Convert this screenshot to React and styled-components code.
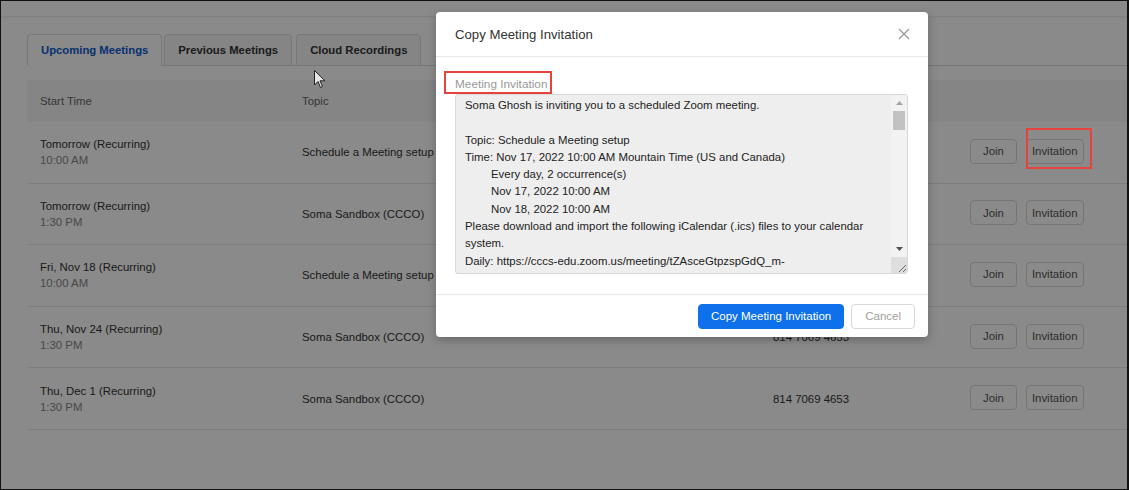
import React from "react";
import styled, { createGlobalStyle } from "styled-components";

const GlobalStyle = createGlobalStyle`
    body {
        margin: 0;
        background: #fff;
        font-family: "Liberation Sans", Arial, sans-serif;
    }
`;

const Frame = styled.div`
    position: relative;
    width: 1129px;
    height: 490px;
    box-sizing: border-box;
    border: 1px solid #111;
    border-right-width: 2px;
    background: #fff;
    overflow: hidden;
`;

const TopBar = styled.div`
    height: 15px;
    border-bottom: 1px solid #ececec;
    box-shadow: 0 1px 2px rgba(0, 0, 0, 0.04);
`;

const Main = styled.div`
    padding: 17px 0 0 26px;
`;

const TabBar = styled.div`
    display: flex;
    height: 32px;
    box-sizing: border-box;
    border-bottom: 1px solid #dcdcdc;
`;

const Tab = styled.div`
    display: flex;
    align-items: center;
    padding: 0 13px;
    margin-right: ${props => props.gap || 3}px;
    height: 32px;
    box-sizing: border-box;
    border: 1px solid #dcdcdc;
    border-bottom-color: ${props => props.active ? "#fff" : "#dcdcdc"};
    border-radius: 4px 4px 0 0;
    background: ${props => props.active ? "#fff" : "#f6f6f6"};
    color: ${props => props.active ? "#0e5bcf" : "#333"};
    font-size: 11.3px;
    font-weight: 700;
`;

const Table = styled.div`
    margin-top: 14px;
`;

const Row = styled.div`
    display: grid;
    grid-template-columns: 262px 471px 197px auto;
    align-items: center;
    padding-left: 13px;
    height: ${props => props.head ? "42px" : "61.6px"};
    box-sizing: border-box;
    background: ${props => props.head ? "#f5f5f5" : "#fff"};
    border-bottom: ${props => props.head ? "none" : "1px solid #e9e9e9"};
    font-size: 11.4px;
    color: ${props => props.head ? "#666" : "#333"};
`;

const When = styled.div`
    line-height: 16px;
`;

const Sub = styled.div`
    color: #888;
`;

const Actions = styled.div`
    display: flex;
    gap: 9px;
    padding-bottom: 2px;
`;

const SmallButton = styled.div`
    position: relative;
    height: 25px;
    box-sizing: border-box;
    padding: 0 ${props => props.pad}px;
    display: flex;
    align-items: center;
    border: 1px solid #d9d9d9;
    border-radius: 4px;
    background: #fff;
    color: #555;
    font-size: 11.4px;
    ${props => props.marked && `
        &::after {
            content: "";
            position: absolute;
            left: -1px;
            top: -12px;
            width: 66px;
            height: 41px;
            box-sizing: border-box;
            border: 2px solid #e8423c;
            z-index: 20;
        }
    `}
`;

const Overlay = styled.div`
    position: absolute;
    inset: 0;
    background: rgba(0, 0, 0, 0.46);
    z-index: 10;
`;

const Modal = styled.div`
    position: absolute;
    top: 11px;
    left: 435px;
    width: 492px;
    background: #fff;
    border-radius: 4px;
    box-shadow: 0 3px 10px rgba(0, 0, 0, 0.25);
    z-index: 30;
`;

const ModalHead = styled.div`
    display: flex;
    align-items: center;
    justify-content: space-between;
    height: 44px;
    padding: 0 18px 0 19px;
    border-bottom: 1px solid #e8e8e8;
`;

const ModalTitle = styled.div`
    font-size: 13.2px;
    color: #333;
`;

const ModalBody = styled.div`
    padding: 19px 20px 20px 19px;
`;

const FieldLabel = styled.div`
    position: relative;
    width: fit-content;
    font-size: 11.8px;
    line-height: 16px;
    color: #999;
    margin-bottom: 2px;
    &::after {
        content: "";
        position: absolute;
        left: -11px;
        top: -5px;
        width: 108px;
        height: 23px;
        box-sizing: border-box;
        border: 2px solid #e8423c;
    }
`;

const TextBox = styled.div`
    display: flex;
    height: 180px;
    box-sizing: border-box;
    border: 1px solid #d8d8d8;
    border-radius: 3px;
    background: #eeeeee;
    overflow: hidden;
`;

const TextContent = styled.div`
    flex: 1;
    padding: 2px 9px 0 9px;
    font-size: 11.4px;
    line-height: 17.3px;
    color: #222;
    white-space: pre;
    overflow: hidden;
`;

const Line = styled.div`
    padding-left: ${props => props.indent ? "26px" : "0"};
    min-height: 17.3px;
`;

const ScrollTrack = styled.div`
    width: 16px;
    display: flex;
    flex-direction: column;
    background: #f2f2f2;
`;

const ScrollArrow = styled.div`
    height: 16px;
    display: flex;
    align-items: center;
    justify-content: center;
`;

const ScrollThumb = styled.div`
    height: 19px;
    margin: 0 2px;
    background: #c2c2c2;
`;

const ScrollSpace = styled.div`
    flex: 1;
`;

const Grip = styled.div`
    height: 16px;
    background: #dedede;
    display: flex;
    align-items: flex-end;
    justify-content: flex-end;
`;

const ModalFoot = styled.div`
    display: flex;
    justify-content: flex-end;
    align-items: center;
    gap: 7px;
    height: 42px;
    padding-right: 13px;
    border-top: 1px solid #e8e8e8;
`;

const FootButton = styled.div`
    height: 25px;
    box-sizing: border-box;
    display: flex;
    align-items: center;
    padding: 0 ${props => props.primary ? 12 : 13}px;
    border-radius: 4px;
    font-size: 11.5px;
    border: 1px solid ${props => props.primary ? "#0e71eb" : "#d9d9d9"};
    background: ${props => props.primary ? "#0e71eb" : "#fff"};
    color: ${props => props.primary ? "#fff" : "#a0a0a0"};
`;

const Cursor = styled.svg`
    position: absolute;
    left: 313px;
    top: 69px;
    z-index: 40;
`;

const meetings = [
    { day: "Tomorrow (Recurring)", time: "10:00 AM", topic: "Schedule a Meeting setup" },
    { day: "Tomorrow (Recurring)", time: "1:30 PM", topic: "Soma Sandbox (CCCO)" },
    { day: "Fri, Nov 18 (Recurring)", time: "10:00 AM", topic: "Schedule a Meeting setup" },
    { day: "Thu, Nov 24 (Recurring)", time: "1:30 PM", topic: "Soma Sandbox (CCCO)" },
    { day: "Thu, Dec 1 (Recurring)", time: "1:30 PM", topic: "Soma Sandbox (CCCO)" },
];

const invitation = [
    { text: "Soma Ghosh is inviting you to a scheduled Zoom meeting." },
    { text: "" },
    { text: "Topic: Schedule a Meeting setup" },
    { text: "Time: Nov 17, 2022 10:00 AM Mountain Time (US and Canada)" },
    { text: "Every day, 2 occurrence(s)", indent: true },
    { text: "Nov 17, 2022 10:00 AM", indent: true },
    { text: "Nov 18, 2022 10:00 AM", indent: true },
    { text: "Please download and import the following iCalendar (.ics) files to your calendar" },
    { text: "system." },
    { text: "Daily: https://cccs-edu.zoom.us/meeting/tZAsceGtpzspGdQ_m-" },
];

const App = () => (
    <>
        <GlobalStyle />
        <Frame>
            <TopBar />
            <Main>
                <TabBar>
                    <Tab active gap={2}>Upcoming Meetings</Tab>
                    <Tab gap={4}>Previous Meetings</Tab>
                    <Tab>Cloud Recordings</Tab>
                </TabBar>
                <Table>
                    <Row head>
                        <div>Start Time</div>
                        <div>Topic</div>
                        <div>Meeting ID</div>
                        <div />
                    </Row>
                    {meetings.map((m, i) => (
                        <Row key={i}>
                            <When>
                                <div>{m.day}</div>
                                <Sub>{m.time}</Sub>
                            </When>
                            <div>{m.topic}</div>
                            <div>814 7069 4653</div>
                            <Actions>
                                <SmallButton pad={12}>Join</SmallButton>
                                <SmallButton pad={5} marked={i === 0}>Invitation</SmallButton>
                            </Actions>
                        </Row>
                    ))}
                </Table>
            </Main>
            <Overlay />
            <Modal>
                <ModalHead>
                    <ModalTitle>Copy Meeting Invitation</ModalTitle>
                    <svg width="12" height="12" viewBox="0 0 12 12">
                        <path d="M1 1 L11 11 M11 1 L1 11" stroke="#9a9a9a" strokeWidth="1.3" />
                    </svg>
                </ModalHead>
                <ModalBody>
                    <FieldLabel>Meeting Invitation</FieldLabel>
                    <TextBox>
                        <TextContent>
                            {invitation.map((l, i) => (
                                <Line key={i} indent={l.indent}>{l.text}</Line>
                            ))}
                        </TextContent>
                        <ScrollTrack>
                            <ScrollArrow>
                                <svg width="7" height="4" viewBox="0 0 7 4">
                                    <path d="M0 4 L3.5 0 L7 4 Z" fill="#a3a3a3" />
                                </svg>
                            </ScrollArrow>
                            <ScrollThumb />
                            <ScrollSpace />
                            <ScrollArrow>
                                <svg width="7" height="4" viewBox="0 0 7 4">
                                    <path d="M0 0 L3.5 4 L7 0 Z" fill="#505050" />
                                </svg>
                            </ScrollArrow>
                            <Grip>
                                <svg width="10" height="10" viewBox="0 0 10 10">
                                    <path d="M2 9 L9 2 M6 9 L9 6" stroke="#666" strokeWidth="1" />
                                </svg>
                            </Grip>
                        </ScrollTrack>
                    </TextBox>
                </ModalBody>
                <ModalFoot>
                    <FootButton primary>Copy Meeting Invitation</FootButton>
                    <FootButton>Cancel</FootButton>
                </ModalFoot>
            </Modal>
            <Cursor width="12" height="19" viewBox="0 0 12 19">
                <path d="M0.5 0.5 L0.5 15 L4 11.5 L6.5 17.5 L8.5 16.6 L6 10.8 L11 10.8 Z" fill="#e6e6e6" stroke="#222" strokeWidth="1" />
            </Cursor>
        </Frame>
    </>
);

export default App;
